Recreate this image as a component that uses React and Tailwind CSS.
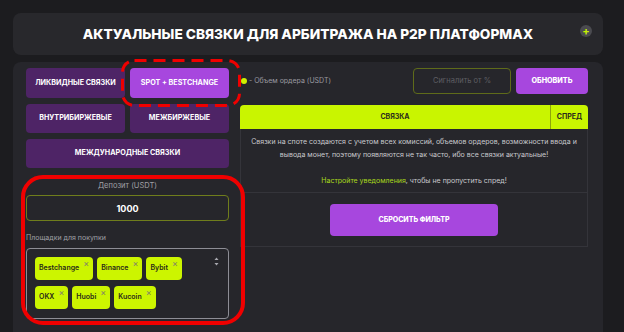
import React from 'react';

const PURPLE_DARK = 'bg-[#4e2466]';

const Chip = ({ label }) => (
  <div className="relative h-[23px] rounded-[4px] bg-[#ccf500] pl-[4px] pr-[14px] flex items-center">
    <span className="text-[7px] font-semibold text-[#2a2a1a]">{label}</span>
    <span className="absolute right-[4px] top-[2px] text-[9px] leading-none text-[#80806a]">×</span>
  </div>
);

const App = () => {
  return (
    <div
      className="relative w-[624px] h-[332px] overflow-hidden bg-[#1c1c1f] pl-[13px] pr-[21px] pt-[13px]"
      style={{ fontFamily: 'Inter, "Open Sans", sans-serif' }}
    >
      {/* header */}
      <div className="relative h-[42px] rounded-lg bg-[#28282c] flex items-center justify-center">
        <h1 className="text-[13.7px] font-extrabold text-white">
          АКТУАЛЬНЫЕ СВЯЗКИ ДЛЯ АРБИТРАЖА НА P2P ПЛАТФОРМАХ
        </h1>
        <div className="absolute right-[11px] top-[12px] w-[12px] h-[12px] rounded-full bg-[#4b4b50] flex items-center justify-center">
          <span className="text-[#c6f000] text-[11px] font-bold leading-none">+</span>
        </div>
      </div>

      {/* main card */}
      <div className="mt-[7px] h-[300px] rounded-lg bg-[#26262b] flex pl-[13px] pr-[13px] pt-[6px]">
        {/* left column */}
        <div className="w-[203px] flex flex-col">
          <div className="grid grid-cols-2 gap-x-[5px] gap-y-[6px]">
            <button className={`h-[30px] rounded-[4px] ${PURPLE_DARK} text-white text-[7.2px] font-bold`}>
              ЛИКВИДНЫЕ СВЯЗКИ
            </button>
            <button className="h-[30px] rounded-[4px] bg-[#a747de] text-white text-[7.2px] font-bold">
              SPOT + BESTCHANGE
            </button>
            <button className={`h-[29px] rounded-[4px] ${PURPLE_DARK} text-white text-[7.2px] font-bold`}>
              ВНУТРИБИРЖЕВЫЕ
            </button>
            <button className={`h-[29px] rounded-[4px] ${PURPLE_DARK} text-white text-[7.2px] font-bold`}>
              МЕЖБИРЖЕВЫЕ
            </button>
            <button className={`col-span-2 h-[29px] rounded-[4px] ${PURPLE_DARK} text-white text-[7.2px] font-bold`}>
              МЕЖДУНАРОДНЫЕ СВЯЗКИ
            </button>
          </div>

          <div className="mt-[12px] text-center text-[7.5px] text-[#a0a0a6]">Депозит (USDT)</div>
          <div className="mt-[4px] h-[26px] rounded-[4px] border border-[#6f7d1c] flex items-center justify-center">
            <span className="text-white text-[9px] font-bold">1000</span>
          </div>

          <div className="mt-[12px] text-[7px] text-[#a0a0a6]">Площадки для покупки</div>
          <div className="relative mt-[4px] h-[71px] rounded-[4px] border border-[#8d8d95] pl-[8px] pt-[8px]">
            <div className="flex flex-wrap gap-x-[4px] gap-y-[6px] w-[160px]">
              <Chip label="Bestchange" />
              <Chip label="Binance" />
              <Chip label="Bybit" />
              <Chip label="OKX" />
              <Chip label="Huobi" />
              <Chip label="Kucoin" />
            </div>
            <svg className="absolute right-[9px] top-[8px]" width="5" height="9" viewBox="0 0 5 9">
              <path d="M2.5 0.5 L4.5 3 L0.5 3 Z" fill="#a9a9b0" />
              <path d="M2.5 8.5 L4.5 6 L0.5 6 Z" fill="#a9a9b0" />
            </svg>
          </div>
        </div>

        {/* right column */}
        <div className="ml-[11px] w-[348px] flex flex-col">
          <div className="h-[26px] flex items-center">
            <span className="w-[6px] h-[6px] rounded-full bg-[#d0f000] ml-[1px]" />
            <span className="ml-[2px] text-[7px] text-[#9a9aa0]">- Объем ордера (USDT)</span>
            <div className="ml-auto w-[98px] h-[26px] rounded-[4px] border border-[#5f6b1a] flex items-center justify-center">
              <span className="text-[7.5px] text-[#5e5e63]">Сигналить от %</span>
            </div>
            <button className="ml-[5px] w-[72px] h-[26px] rounded-[4px] bg-[#a747de] text-white text-[7.2px] font-extrabold">
              ОБНОВИТЬ
            </button>
          </div>

          <div className="mt-[11px] flex h-[24px] rounded-t-[4px] bg-[#c9f500] text-[#2c2c1c] text-[7px] font-bold">
            <div className="flex-1 flex items-center justify-center border-r border-[#8ea50a]">СВЯЗКА</div>
            <div className="w-[37px] flex items-center justify-center">СПРЕД</div>
          </div>
          <div className="border border-t-0 border-[#34343a]">
            <p className="px-[4px] pt-[6px] pb-[5px] text-center text-[7px] leading-[13px] text-[#c9c9cd] whitespace-nowrap">
              Связки на споте создаются с учетом всех комиссий, объемов ордеров, возможности ввода и
              <br />
              вывода монет, поэтому появляются не так часто, ибо все связки актуальные!
              <br />
              <br />
              <span className="text-[#a9d91c]">Настройте уведомления</span>, чтобы не пропустить спред!
            </p>
            <div className="border-t border-[#34343a] pt-[11px] pb-[10px] flex justify-center">
              <button className="w-[168px] h-[32px] rounded-[4px] bg-[#a747de] text-white text-[7px] font-extrabold">
                СБРОСИТЬ ФИЛЬТР
              </button>
            </div>
          </div>
        </div>
      </div>

      {/* annotation overlays */}
      <svg className="absolute left-[121px] top-[59px]" width="120" height="48" viewBox="0 0 120 48">
        <rect x="1.5" y="1.5" width="117" height="45" rx="12" fill="none" stroke="#f00000" strokeWidth="3" strokeDasharray="12 7" />
      </svg>
      <div className="absolute left-[21px] top-[175px] w-[224px] h-[150px] rounded-[22px] border-[4px] border-[#f00000]" />
    </div>
  );
};

export default App;
